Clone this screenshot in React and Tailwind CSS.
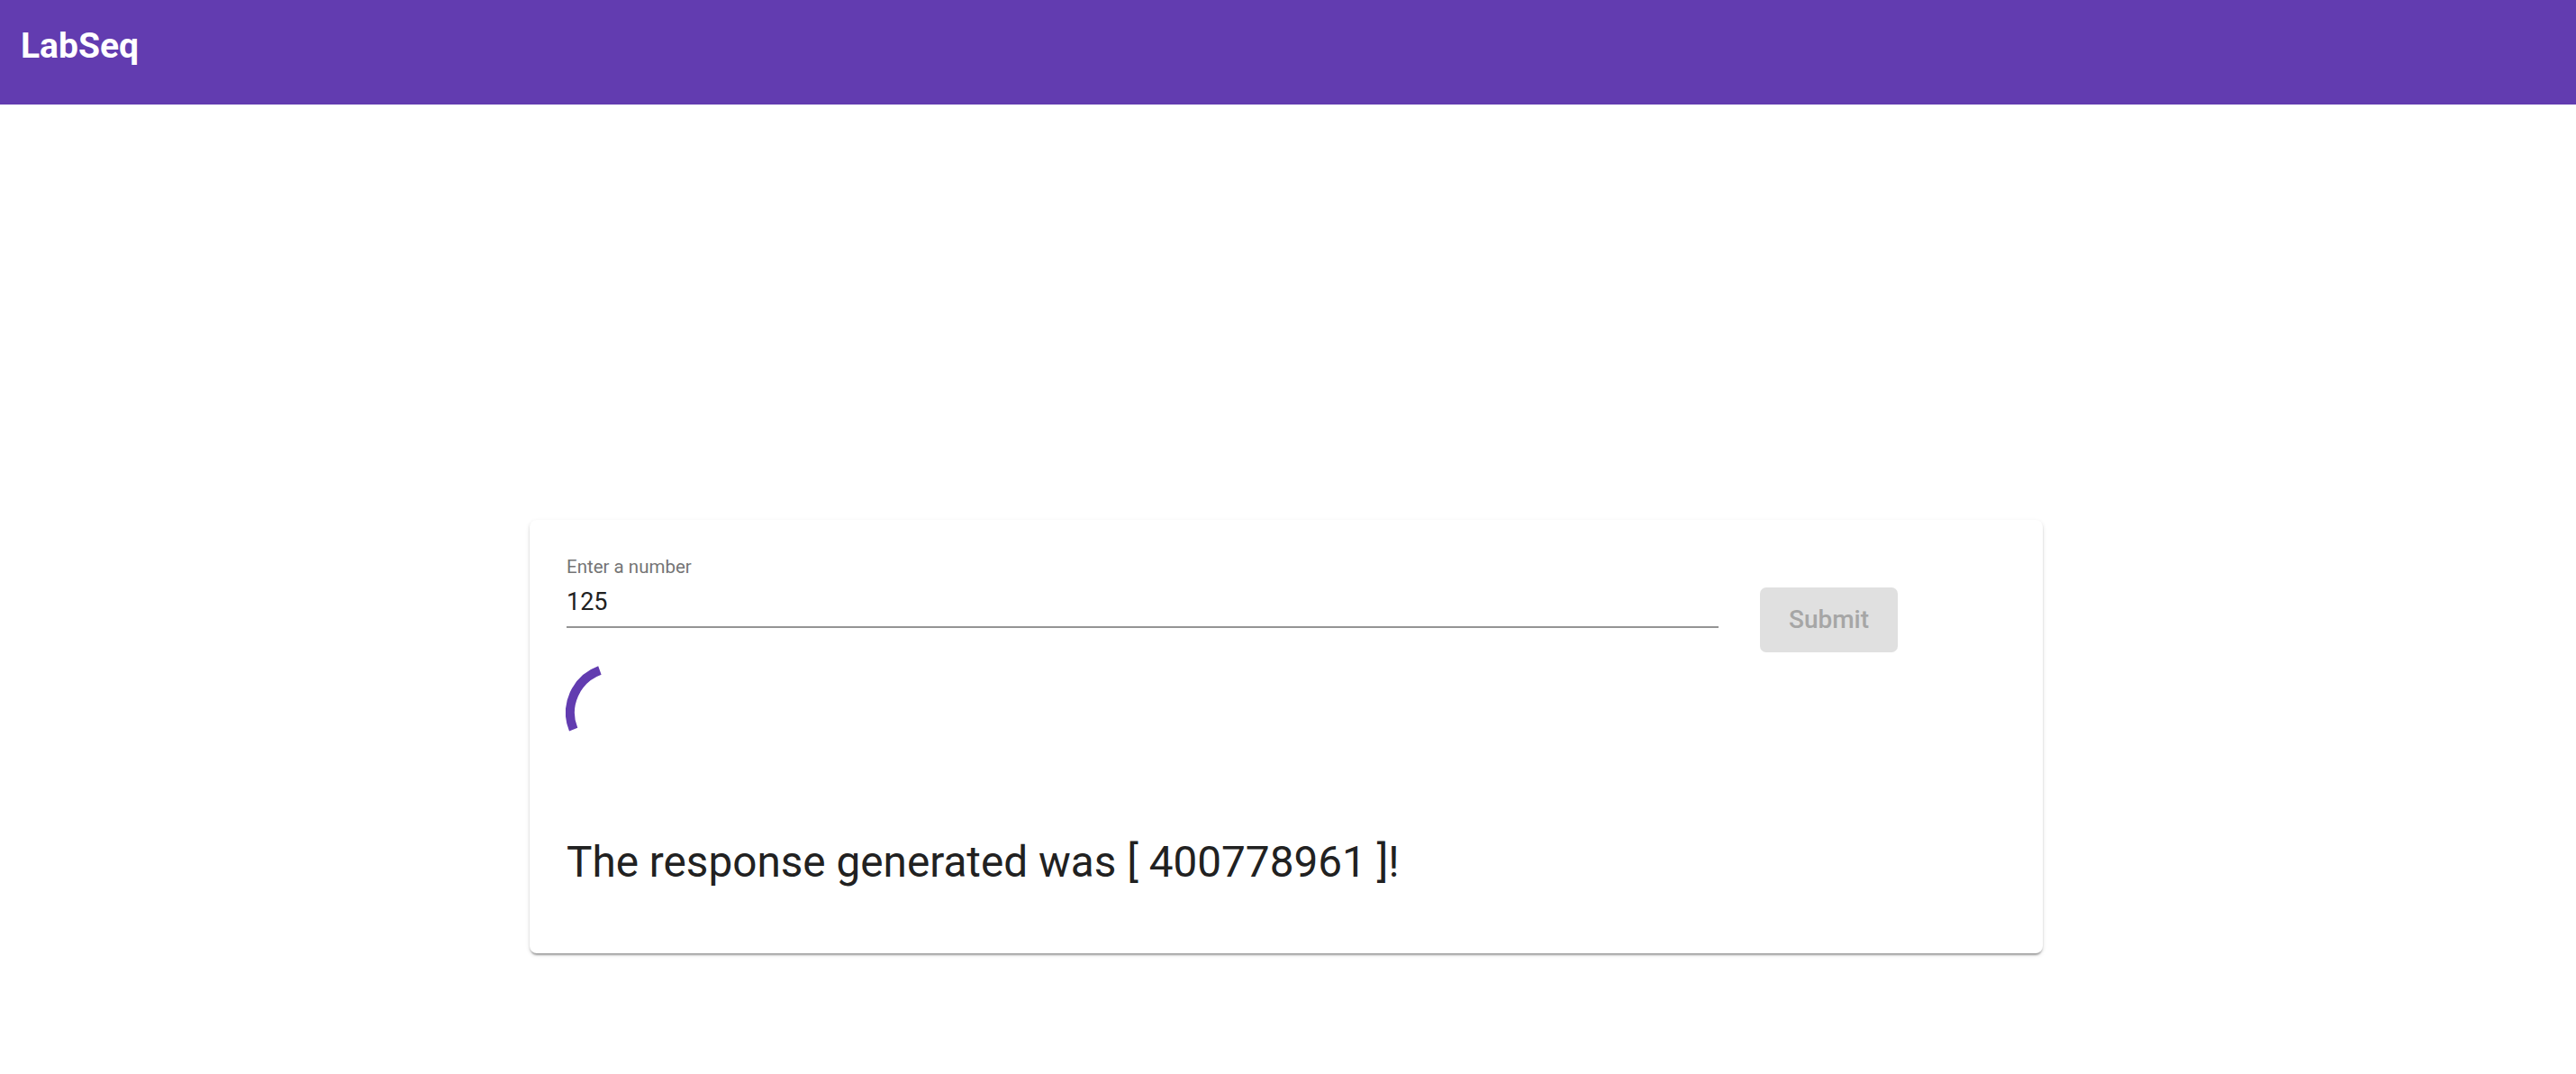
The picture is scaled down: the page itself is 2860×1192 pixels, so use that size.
import { useState } from "react";

const FONT = "font-['Roboto','Liberation_Sans',sans-serif]";

// partial ring, like a frozen indeterminate progress spinner
const Spinner = () => (
  <svg width="110" height="110" viewBox="0 0 110 110" className="block">
    <path
      d="M 8.64 73.73 A 50 50 0 0 1 37.9 8.0"
      fill="none"
      stroke="#623cb0"
      strokeWidth="10"
    />
  </svg>
);

export default function App() {
  const [value, setValue] = useState("125");

  return (
    <div className={`${FONT} min-h-screen bg-white text-[#212121]`}>
      {/* ── App bar ─────────────────────────────── */}
      <header className="h-[116px] bg-[#623cb0] px-[23px] pt-[28px]">
        <h1 className="text-[39px] leading-[47px] font-bold text-white">LabSeq</h1>
      </header>

      {/* ── Card ────────────────────────────────── */}
      <main className="pt-[461px] pl-[588px]">
        <div className="w-[1680px] rounded-[8px] bg-white pl-[41px] pt-[40px] pb-[73px] shadow-[0_4px_2px_-2px_rgba(0,0,0,0.2),0_2px_2px_0_rgba(0,0,0,0.14),0_2px_5px_0_rgba(0,0,0,0.12)]">
          <div className="flex items-start">
            <div className="w-[1279px]">
              <label className="block text-[20.5px] leading-[24px] text-[#757575]">
                Enter a number
              </label>
              <input
                type="text"
                value={value}
                onChange={(e) => setValue(e.target.value)}
                className="mt-[11px] block h-[32px] w-full border-b-2 border-[#949494] pb-[11px] box-content text-[27px] leading-[32px] text-[#212121] outline-none"
              />
            </div>
            <button
              disabled
              className="ml-[46px] mt-[35px] h-[72px] w-[153px] rounded-[7px] bg-[#e0e0e0] text-[28px] font-medium text-[#a6a6a6]"
            >
              Submit
            </button>
          </div>

          <div className="mt-[12px] -ml-px">
            <Spinner />
          </div>

          <p className="mt-[83px] text-[47.7px] leading-[56px] text-[#212121]">
            The response generated was [ 400778961 ]!
          </p>
        </div>
      </main>
    </div>
  );
}
